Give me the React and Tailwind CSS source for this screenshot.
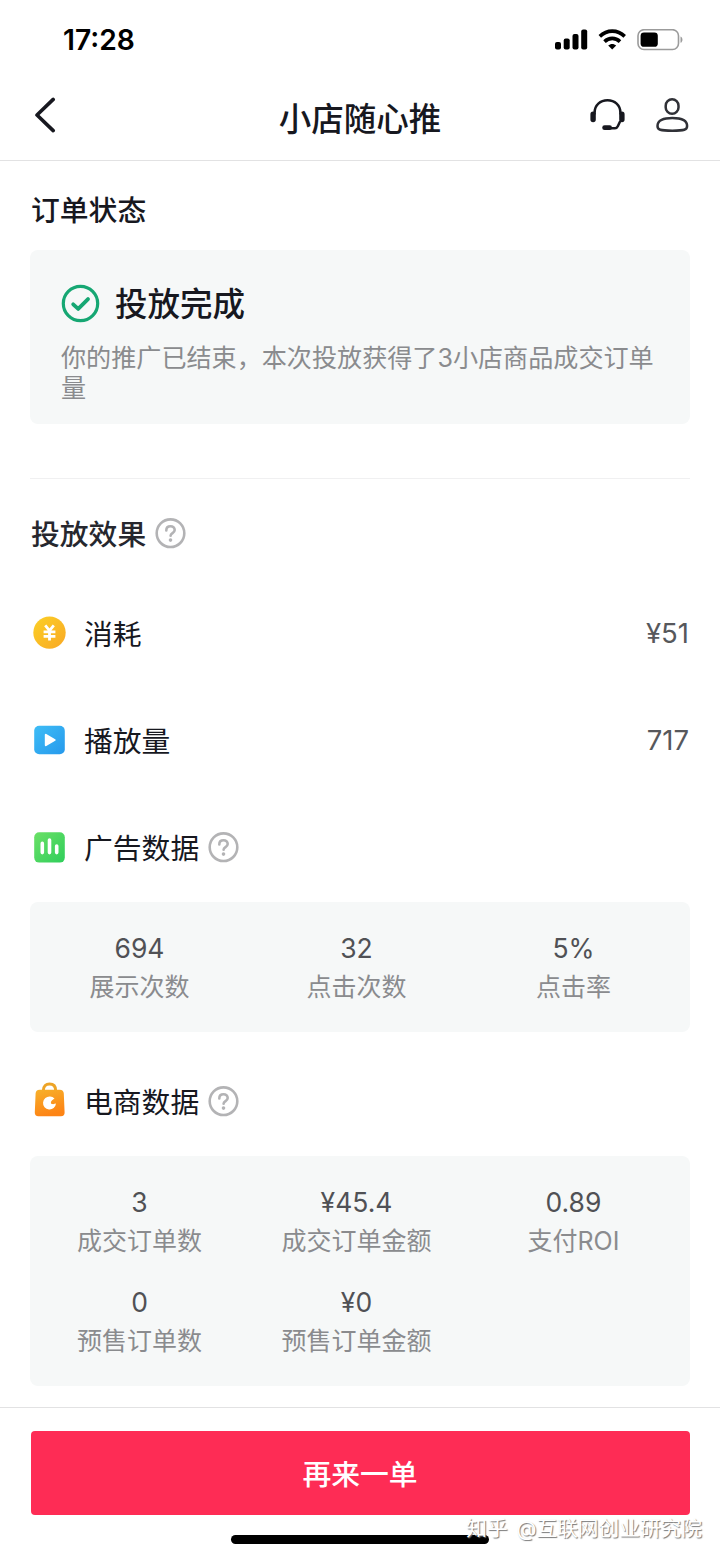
const AD_STATS = [
  { value: '694', label: '展示次数' },
  { value: '32', label: '点击次数' },
  { value: '5%', label: '点击率' },
]

const SHOP_STATS = [
  { value: '3', label: '成交订单数' },
  { value: '¥45.4', label: '成交订单金额' },
  { value: '0.89', label: '支付ROI' },
  { value: '0', label: '预售订单数' },
  { value: '¥0', label: '预售订单金额' },
]

function StatusBar() {
  return (
    <div className="h-20 pl-[63px] pr-[36px] flex items-center justify-between text-black">
      <span className="text-[28.2px] leading-none font-semibold">17:28</span>
      <div className="flex items-center">
        <svg width="33" height="22" viewBox="0 0 33 22" fill="currentColor">
          <rect x="0" y="13" width="6" height="7.5" rx="2" />
          <rect x="8.7" y="9.4" width="6" height="11.1" rx="2" />
          <rect x="17.5" y="5" width="6" height="15.5" rx="2" />
          <rect x="26.2" y="0.5" width="6" height="20" rx="2" />
        </svg>
        <svg className="ml-[10px]" width="29" height="22" viewBox="0 0 29 22" fill="none" stroke="currentColor" strokeWidth="3.6">
          <path d="M1.8 7.4C9 .4 19.500 .4 26.700 7.4" />
          <path d="M6.5 12.6C11 8.300 17.500 8.300 22 12.6" />
          <path d="M14.2 20.500l-4-4c2.300-2.100 5.700-2.100 8 0z" fill="currentColor" stroke="none" />
        </svg>
        <svg className="ml-[10px]" width="47" height="22" viewBox="0 0 47 22">
          <rect x="1" y="0.700" width="40.5" height="19.800" rx="6" fill="none" stroke="#9b9b9b" strokeWidth="1.6" />
          <rect x="3.6" y="3.400" width="17.200" height="14.4" rx="3.4" fill="#000" />
          <path d="M43.5 7.400v6.4c2.6-1 2.6-5.4 0-6.4z" fill="#9b9b9b" />
        </svg>
      </div>
    </div>
  )
}

function Header() {
  return (
    <div className="h-[81px] px-[31px] pb-[10px] grid grid-cols-[100px_1fr_100px] items-center border-b border-[#e2e2e3] text-[#17181f]">
      <svg width="26" height="36" viewBox="0 0 26 36" fill="none" stroke="currentColor" strokeWidth="3.6" strokeLinecap="round" strokeLinejoin="round">
        <path d="M22.2 2.4L6 18l16.2 15.6" />
      </svg>
      <h1 className="text-center text-[32.5px] leading-[40px] font-medium pt-[10px]">小店随心推</h1>
      <div className="flex items-center justify-end gap-[30px]">
        <svg width="36" height="34" viewBox="0 0 36 34" fill="none" stroke="currentColor" strokeWidth="2.5" strokeLinecap="round">
          <path d="M4.6 15.500v-.8C4.6 7.200 10.300 2.300 17.500 2.300S30.400 7.200 30.400 14.700v.8" />
          <path d="M3.100 16.200v5.400M31.900 16.200v5.400" strokeWidth="5.400" />
          <path d="M29.800 24l-2 4.300c-.6 1.300-1.400 2-2.800 2h-5" />
          <path d="M14.600 29.700h5" strokeWidth="4.800" />
        </svg>
        <svg width="33" height="35" viewBox="0 0 33 35" fill="none" stroke="#303137" strokeWidth="2.5">
          <rect x="9.700" y="1.300" width="12.800" height="14.500" rx="6.4" />
          <path d="M1.5 28c0-5.600 6-7.900 14.800-7.900s14.800 2.3 14.800 7.900c0 3.900-2.600 4.700-14.800 4.700S1.5 31.900 1.5 28z" />
        </svg>
      </div>
    </div>
  )
}

function HelpIcon() {
  return (
    <svg className="ml-[9px] shrink-0" width="31" height="31" viewBox="0 0 31 31" fill="none" stroke="#b3b3b5" strokeWidth="2.6" strokeLinecap="round">
      <circle cx="15.5" cy="15.2" r="13.8" />
      <path d="M11.3 12.4c0-2.600 1.800-4.100 4.200-4.100s4.200 1.500 4.200 3.800c0 3-4.100 3-4.100 5.600" />
      <circle cx="15.5" cy="22.1" r="1.8" fill="#b3b3b5" stroke="none" />
    </svg>
  )
}

function CoinIcon() {
  return (
    <svg width="38" height="38" viewBox="0 0 38 38">
      <defs>
        <linearGradient id="coin" x1="0" y1="0" x2="1" y2="1">
          <stop offset="0" stopColor="#fbd026" />
          <stop offset="1" stopColor="#f9a825" />
        </linearGradient>
      </defs>
      <circle cx="19.5" cy="18.6" r="16.2" fill="url(#coin)" />
      <path d="M15.200 11.400l4.3 5.200 4.3-5.200M13.600 17.800h11.800M13.600 22.300h11.800M19.500 16.600v10" fill="none" stroke="#fff" strokeWidth="2.8" />
    </svg>
  )
}

function PlayIcon() {
  return (
    <svg width="38" height="38" viewBox="0 0 38 38">
      <defs>
        <linearGradient id="play" x1="0" y1="0" x2="1" y2="1">
          <stop offset="0" stopColor="#3ebdf6" />
          <stop offset="1" stopColor="#2699ec" />
        </linearGradient>
      </defs>
      <rect x="4.200" y="4.800" width="30.6" height="28.4" rx="5" fill="url(#play)" />
      <path d="M15.8 13.800v10.400l8.900-5.200z" fill="#fff" stroke="#fff" strokeWidth="2" strokeLinejoin="round" />
    </svg>
  )
}

function ChartIcon() {
  return (
    <svg width="38" height="38" viewBox="0 0 38 38">
      <defs>
        <linearGradient id="chart" x1="0" y1="0" x2="1" y2="1">
          <stop offset="0" stopColor="#6be066" />
          <stop offset="1" stopColor="#2fce5b" />
        </linearGradient>
      </defs>
      <rect x="4.2" y="4.2" width="30.6" height="30.4" rx="5" fill="url(#chart)" />
      <path d="M12.3 15.400v9.200M19.5 12v12.600M26.700 18v6.600" stroke="#fff" strokeWidth="3.6" strokeLinecap="round" />
    </svg>
  )
}

function BagIcon() {
  return (
    <svg width="38" height="38" viewBox="0 0 38 38">
      <defs>
        <linearGradient id="bag" x1="0" y1="0" x2="0.3" y2="1">
          <stop offset="0" stopColor="#f7b12b" />
          <stop offset="1" stopColor="#fd8415" />
        </linearGradient>
      </defs>
      <path d="M13.300 8.800C13.300 3.900 16.200 2 19.500 2s6.2 1.900 6.2 6.8" fill="none" stroke="#eda426" strokeWidth="3" />
      <path d="M9.600 7.800h20.200a4 4 0 0 1 4 3.800l.8 19a3.6 3.6 0 0 1-3.6 3.700H8.400a3.6 3.6 0 0 1-3.600-3.700l.8-19a4 4 0 0 1 4-3.800z" fill="url(#bag)" />
      <path d="M20.100 14.500a6.500 6.500 0 1 0 5.900 7.100c-1.800.6-4.700 1-5.100-.6-.4-1.700 1.800-3.400 3.600-4.600a6.500 6.500 0 0 0-4.400-1.900z" fill="#fff" />
    </svg>
  )
}

function MetricRow({ icon, name, value, help }) {
  return (
    <div className="h-[42px] flex items-center">
      {icon}
      <span className="ml-4 pt-[3px] text-[28.8px] leading-[42px] text-[#17181f]">{name}</span>
      {help && <HelpIcon />}
      {value && <span className="ml-auto mr-[1px] pt-[2px] text-[27.5px] text-[#57585c]">{value}</span>}
    </div>
  )
}

function StatsCard({ stats }) {
  return (
    <div className="bg-[#f6f8f8] rounded-lg pt-[27px] pb-[25px] pl-px pr-2 grid grid-cols-3 gap-y-[22px] text-center">
      {stats.map((s) => (
        <div key={s.label}>
          <div className="text-[26.5px] leading-[39px] text-[#505155]">{s.value}</div>
          <div className="text-[25px] leading-[39px] text-[#8a8b8e]">{s.label}</div>
        </div>
      ))}
    </div>
  )
}

export default function App() {
  return (
    <div className="w-[720px] h-[1558px] relative overflow-hidden bg-white flex flex-col font-['Inter','Noto_Sans_CJK_SC',sans-serif]">
      <StatusBar />
      <Header />

      <main className="flex-1 px-[30px]">
        <h2 className="pt-[29px] pl-px text-[28.8px] leading-[42px] font-medium text-[#17181f]">订单状态</h2>
        <div className="mt-[18px] h-[174px] rounded-lg bg-[#f6f8f8] pl-[31px] pr-7 pt-[33px]">
          <div className="h-10 flex items-center gap-[15px]">
            <svg width="39" height="40" viewBox="0 0 39 40" fill="none" stroke="#16a773" strokeLinecap="round" strokeLinejoin="round">
              <circle cx="19.5" cy="20.5" r="17.2" strokeWidth="3.2" />
              <path d="M12.2 21.3l5 4.6 9.8-9.800" strokeWidth="3.8" />
            </svg>
            <span className="pt-1 text-[32.5px] leading-[40px] font-medium text-[#17181f]">投放完成</span>
          </div>
          <p className="mt-5 text-[25.1px] leading-[30px] text-[#8a8b8e]">
            你的推广已结束，本次投放获得了3小店商品成交订单量
          </p>
        </div>

        <div className="mt-[54px] h-px bg-[#f0f0f1]" />

        <div className="mt-[33px] h-[42px] flex items-center">
          <h2 className="pt-[3px] pl-px text-[28.8px] leading-[42px] font-medium text-[#26272e]">投放效果</h2>
          <HelpIcon />
        </div>

        <div className="mt-[58px] flex flex-col gap-[65px]">
          <MetricRow icon={<CoinIcon />} name="消耗" value="¥51" />
          <MetricRow icon={<PlayIcon />} name="播放量" value="717" />
          <MetricRow icon={<ChartIcon />} name="广告数据" help />
        </div>

        <div className="mt-[34px]">
          <StatsCard stats={AD_STATS} />
        </div>

        <div className="mt-[48px] mb-[34px]">
          <MetricRow icon={<BagIcon />} name="电商数据" help />
        </div>
        <StatsCard stats={SHOP_STATS} />
      </main>

      <footer className="h-[151px] px-[30.5px] pt-[23px] flex flex-col items-center border-t border-[#e2e2e3] bg-white">
        <button className="w-full h-[84px] pt-[3px] rounded bg-[#fe2c55] text-white text-[28.8px] font-medium">再来一单</button>
        <div className="mt-5 w-[258px] h-[9px] rounded-full bg-black" />
      </footer>

      {/* Watermark */}
      <div className="absolute right-[18px] bottom-[14px] text-[20.7px] leading-[30px] [word-spacing:3px] whitespace-nowrap text-white [text-shadow:1px_1px_1px_#777]">
        知乎 @互联网创业研究院
      </div>
    </div>
  )
}
